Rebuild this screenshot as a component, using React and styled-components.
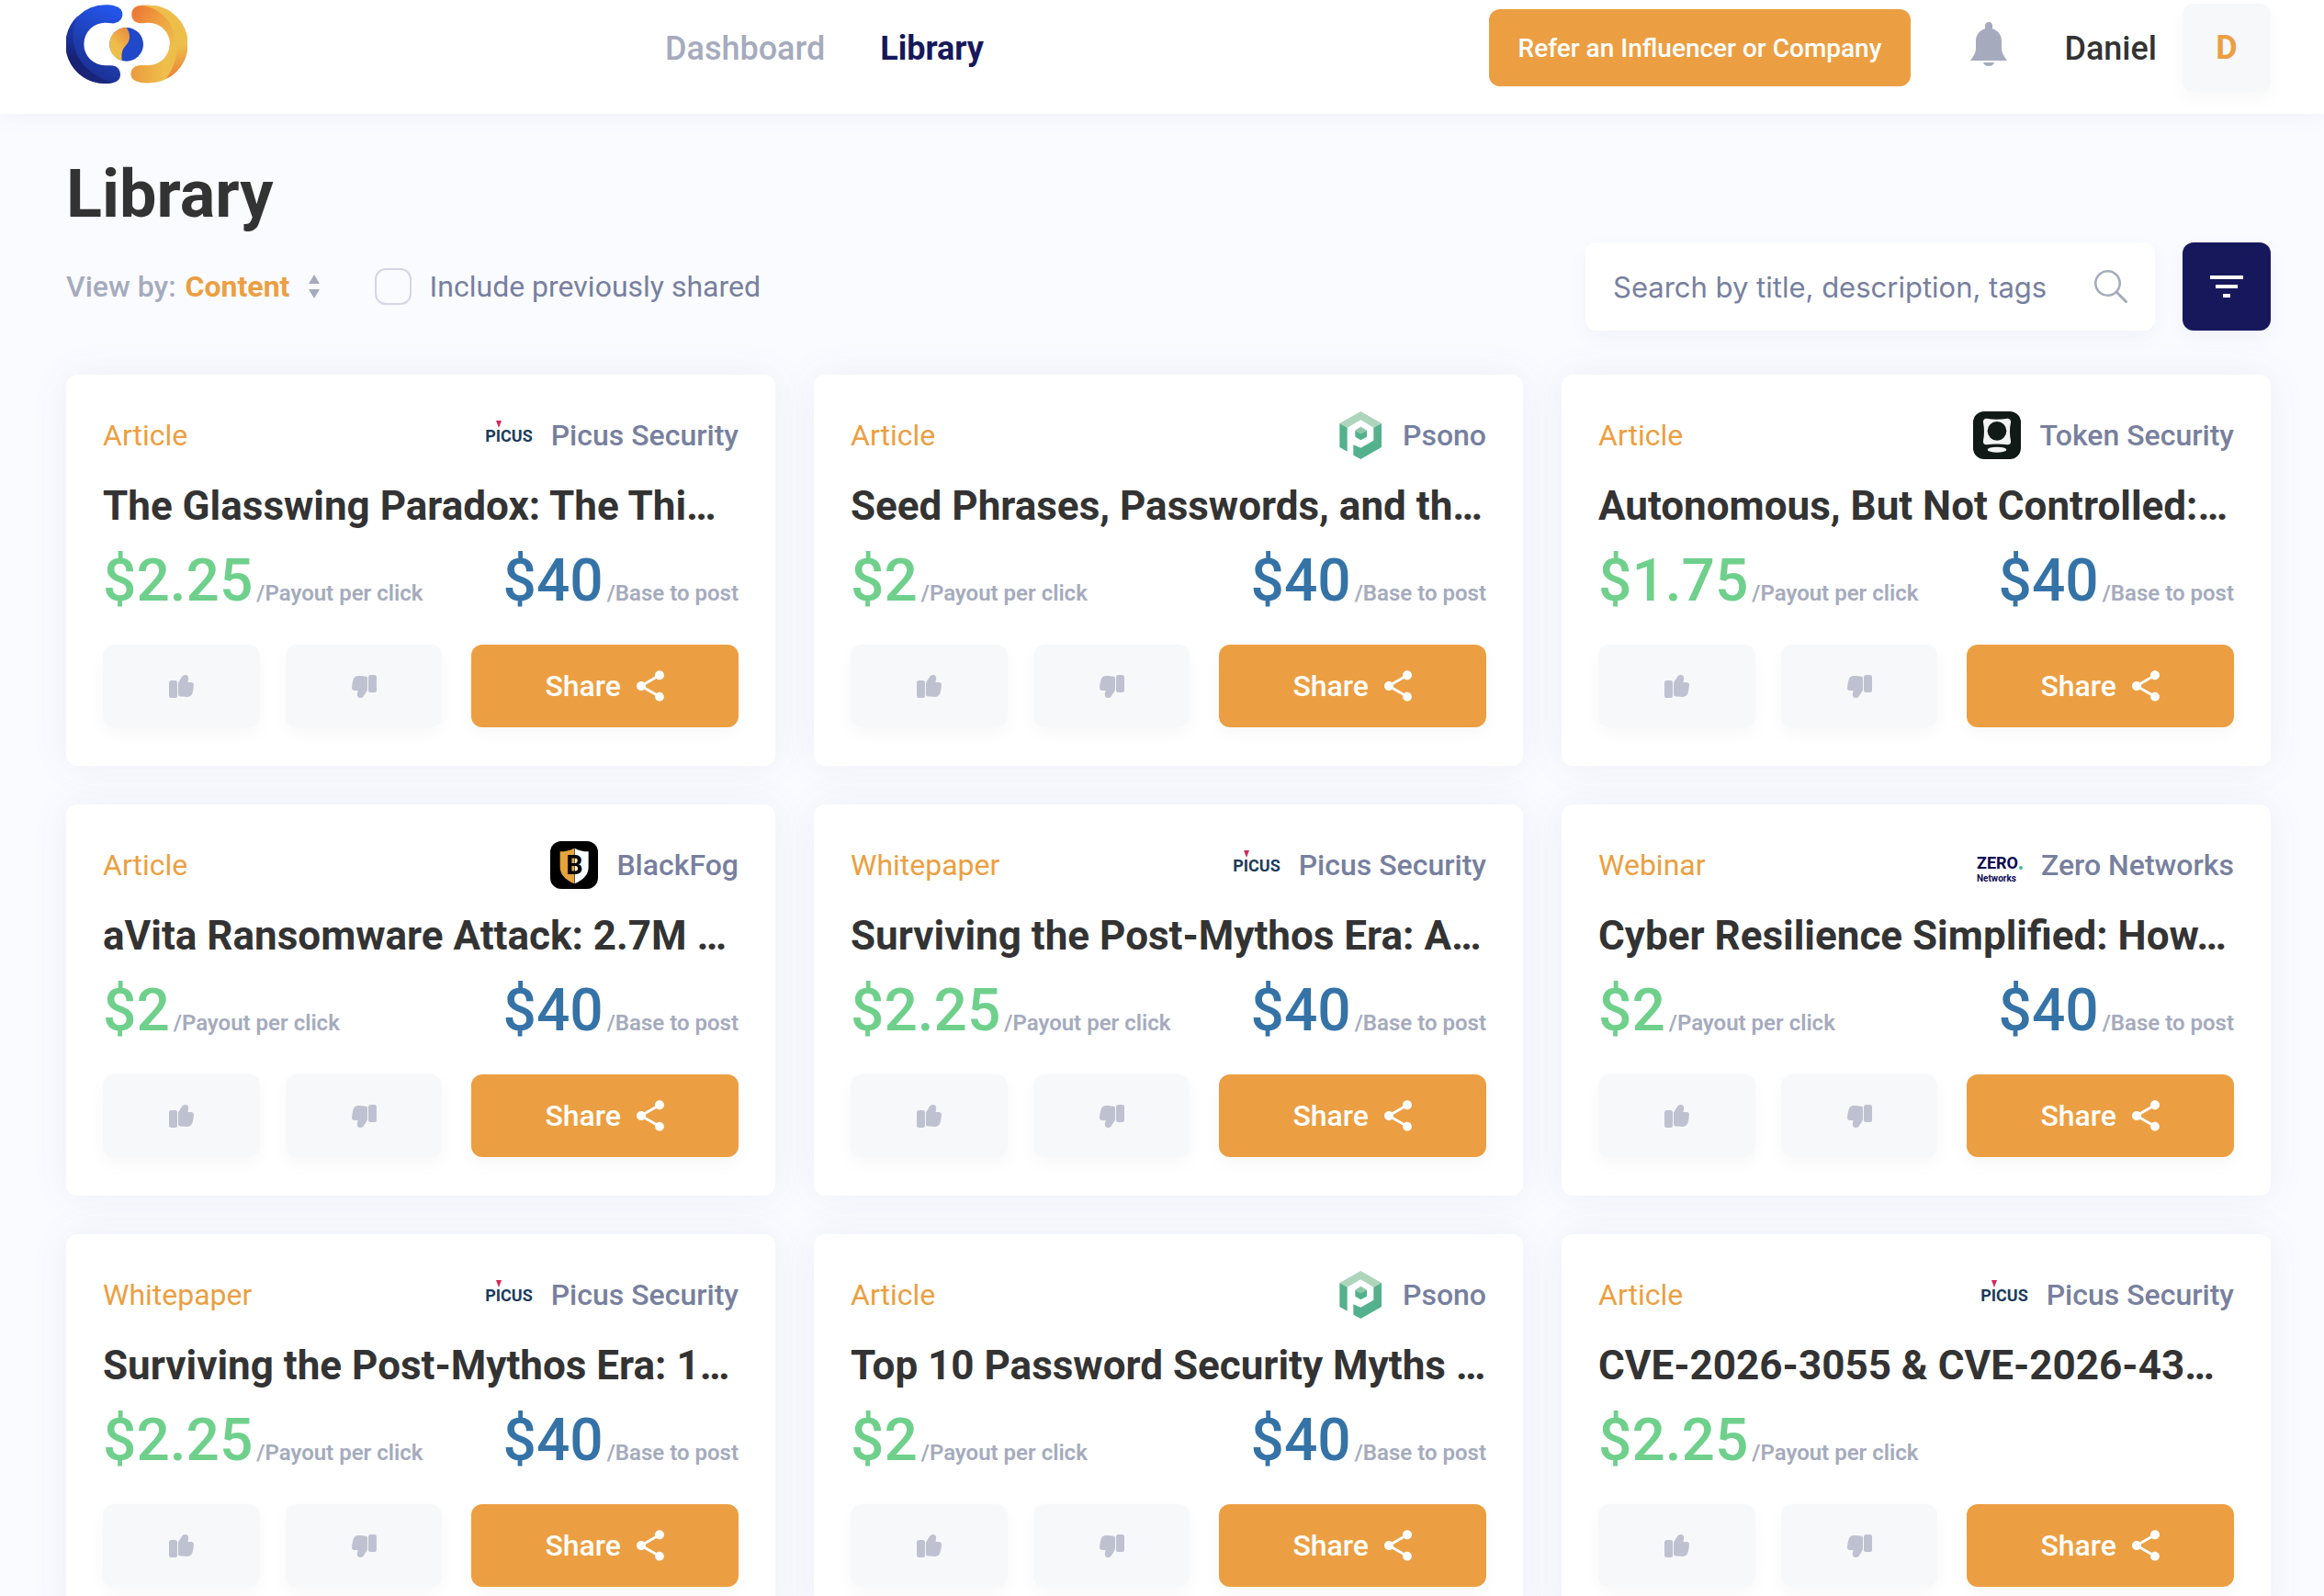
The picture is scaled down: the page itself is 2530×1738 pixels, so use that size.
import React from 'react'
import styled, { createGlobalStyle } from 'styled-components'
import { MdFilterList, MdShare } from 'react-icons/md'

const GlobalStyle = createGlobalStyle`
  * {
    box-sizing: border-box;
  }
  body {
    margin: 0;
    background-color: #fafbff;
    font-family: Roboto, 'Liberation Sans', sans-serif;
    font-size: 32px;
    color: #333333;
  }
  button, input, select {
    font-family: inherit;
    font-size: inherit;
    border: none;
    outline: none;
    padding: 0;
    margin: 0;
  }
  button {
    cursor: pointer;
  }
`
const Page = styled.div`
  height: 100vh;
  overflow: hidden;
`
const Header = styled.header`
  display: flex;
  align-items: center;
  padding: 4px 58px 24px 72px;
  background-color: #ffffff;
  box-shadow: 0 0 24px rgba(90, 100, 170, 0.08);
`
const LogoLink = styled.a`
  display: flex;
  padding-bottom: 8px;
`
const Nav = styled.nav`
  display: flex;
  flex: 1;
  gap: 60px;
  margin-left: 520px;
  padding-top: 2px;
`
const NavLink = styled.a`
  font-size: 36px;
  line-height: 42px;
  font-weight: ${(props) => (props.$active ? 700 : 500)};
  color: ${(props) => (props.$active ? '#17185b' : '#a5abbd')};
  text-decoration: none;
`
const ReferButton = styled.button`
  height: 84px;
  padding: 0 32px;
  border-radius: 12px;
  background-color: #eb9f42;
  color: #ffffff;
  font-size: 28px;
  font-weight: 500;
`
const BellButton = styled.button`
  display: flex;
  margin: 0 62px 8px 65px;
  background: none;
`
const UserName = styled.span`
  padding-top: 2px;
  font-size: 36px;
  line-height: 42px;
  font-weight: 500;
`
const Avatar = styled.button`
  width: 96px;
  height: 96px;
  margin-left: 28px;
  border-radius: 12px;
  background-color: #f6f8fa;
  box-shadow: 0 8px 20px rgba(0, 0, 0, 0.03);
  color: #eb9f42;
  font-size: 36px;
  font-weight: 700;
`
const Main = styled.main`
  padding: 46px 58px 42px 72px;
`
const Heading = styled.h1`
  margin: 0;
  font-size: 72px;
  line-height: 84px;
  font-weight: 700;
`
const Toolbar = styled.div`
  display: flex;
  align-items: center;
  margin: 10px 0 48px;
`
const ViewBy = styled.label`
  display: flex;
  align-items: center;
  gap: 10px;
  color: #a5abbd;
  font-weight: 500;
`
const ViewSelect = styled.select`
  width: 124px;
  appearance: none;
  background: none;
  color: #eb9f42;
  font-weight: 700;
  cursor: pointer;
`
const IncludeLabel = styled.label`
  display: flex;
  flex: 1;
  align-items: center;
  gap: 20px;
  margin-left: 60px;
  color: #77809e;
`
const Checkbox = styled.input`
  appearance: none;
  width: 40px;
  height: 40px;
  border: 2px solid #d5d6e2;
  border-radius: 12px;
  &:checked {
    background-color: #eb9f42;
  }
`
const SearchBox = styled.label`
  display: flex;
  align-items: center;
  width: 620px;
  height: 96px;
  padding: 0 30px;
  border-radius: 12px;
  background-color: #ffffff;
  box-shadow: 0 8px 20px rgba(90, 100, 170, 0.05);
`
const SearchInput = styled.input`
  flex: 1;
  min-width: 0;
  background: none;
  font-family: Inter, sans-serif;
  font-size: 31px;
  color: #333333;
  &::placeholder {
    color: #77809e;
    opacity: 1;
  }
`
const FilterButton = styled.button`
  display: flex;
  align-items: center;
  justify-content: center;
  width: 96px;
  height: 96px;
  margin-left: 30px;
  border-radius: 12px;
  background-color: #17185b;
  box-shadow: 0 8px 20px rgba(90, 100, 170, 0.06);
  color: #ffffff;
`
const Grid = styled.div`
  display: grid;
  grid-template-columns: repeat(3, minmax(0, 1fr));
  gap: 42px;
`
const Card = styled.article`
  padding: 40px 40px 42px;
  border-radius: 12px;
  background-color: #ffffff;
  box-shadow: 0 0 40px rgba(90, 100, 170, 0.08);
`
const CardHead = styled.div`
  display: flex;
  align-items: center;
  justify-content: space-between;
`
const Kind = styled.span`
  color: #eb9f42;
`
const Company = styled.span`
  display: flex;
  align-items: center;
  gap: 20px;
  height: 52px;
  color: #77809e;
  font-weight: 500;
`
const Title = styled.h2`
  margin: 21px 0 14px;
  overflow: hidden;
  font-size: 44px;
  line-height: 60px;
  font-weight: 700;
  white-space: nowrap;
`
const Prices = styled.div`
  display: flex;
  justify-content: space-between;
  height: 76px;
  margin-bottom: 31px;
`
const Price = styled.div`
  display: flex;
  align-items: baseline;
  gap: 4px;
  font-size: 64px;
  line-height: 76px;
  font-weight: 500;
  color: ${(props) => (props.$base ? '#3573a7' : '#6fd08c')};
`
const Unit = styled.span`
  font-size: 24px;
  line-height: 28px;
  font-weight: 600;
  color: #a5abbd;
`
const Actions = styled.div`
  display: flex;
  gap: 32px;
`
const Votes = styled.div`
  display: flex;
  flex: 1;
  gap: 28px;
`
const VoteButton = styled.button`
  display: flex;
  flex: 1;
  align-items: center;
  justify-content: center;
  height: 90px;
  border-radius: 12px;
  background-color: #f6f8fa;
  box-shadow: 0 8px 20px rgba(0, 0, 0, 0.03);
`
const ShareButton = styled.button`
  display: flex;
  align-items: center;
  justify-content: center;
  gap: 12px;
  width: 42%;
  height: 90px;
  padding-left: 4px;
  border-radius: 12px;
  background-color: #eb9f42;
  box-shadow: 0 8px 20px rgba(0, 0, 0, 0.03);
  color: #ffffff;
  font-weight: 500;
`

function Logo() {
  return (
    <svg width="132" height="86" viewBox="96 14 396 258">
      <defs>
        <linearGradient id="blue" x1="0.9" y1="0" x2="0.5" y2="1">
          <stop offset="0" stopColor="#2458f2" />
          <stop offset="0.5" stopColor="#1f42bd" />
          <stop offset="1" stopColor="#1b2d8c" />
        </linearGradient>
        <linearGradient id="navy" x1="0.3" y1="0" x2="0.5" y2="1">
          <stop offset="0" stopColor="#1d3fb4" />
          <stop offset="0.6" stopColor="#172071" />
          <stop offset="1" stopColor="#1a267c" />
        </linearGradient>
        <linearGradient id="orange" x1="0" y1="0" x2="0.7" y2="0.6">
          <stop offset="0" stopColor="#ec7032" />
          <stop offset="0.55" stopColor="#eea040" />
          <stop offset="1" stopColor="#eebe4a" />
        </linearGradient>
        <linearGradient id="tail" x1="0" y1="0" x2="0.7" y2="0">
          <stop offset="0" stopColor="#ec9a3e" />
          <stop offset="1" stopColor="#eebe4a" />
        </linearGradient>
        <linearGradient id="edge" x1="0.2" y1="0" x2="0.4" y2="1">
          <stop offset="0" stopColor="#eebe4a" />
          <stop offset="0.65" stopColor="#eebe4a" />
          <stop offset="1" stopColor="#ec863a" />
        </linearGradient>
        <linearGradient id="ballGold" x1="0.8" y1="0" x2="0.4" y2="0.6">
          <stop offset="0" stopColor="#ec8c3a" />
          <stop offset="1" stopColor="#eebe4a" />
        </linearGradient>
      </defs>
      <path
        d="M224 15c14 0 26 1 37 6 12 4 19 13 19 24 0 20-16 32-37 30-6-1-12-2-19-2a70 70 0 0 0 0 140c6 0 12 0 18 0 19 0 31 12 31 30 0 15-9 23-23 26a128 128 0 0 1-26 3 128 128 0 0 1 0-257z"
        fill="url(#blue)"
      />
      <path
        d="M134 51C96 128 125 234 250 269a128 128 0 0 1-26 3A128 128 0 0 1 134 51z"
        fill="url(#navy)"
      />
      <path
        d="M365 16a127 127 0 0 1 0 254c-14 0-25-1-35-5-14-4-22-12-22-24 0-19 15-29 36-28 7 0 14 0 21 0a70 70 0 0 0 0-140c-8 0-13 1-20 2-20 1-35-9-35-29 0-16 10-26 25-28 10-2 20-2 30-2z"
        fill="url(#orange)"
      />
      <path
        d="M434 143a70 70 0 0 1-69 70c-7 0-14 0-21 0-21-1-36 9-36 28 0 12 8 20 22 24 10 4 21 5 35 5 22 0 40-4 56-12 32-36 44-72 42-115z"
        fill="url(#tail)"
      />
      <path
        d="M349 17c94 17 149 138 72 241A127 127 0 0 0 365 16c-6 0-10 0-16 1z"
        fill="url(#edge)"
      />
      <circle cx="293" cy="144" r="55" fill="#2048c8" />
      <path
        d="M293 89c14 20 13 40 2 54-12 13-20 22-17 54A55 55 0 0 1 293 89z"
        fill="url(#ballGold)"
      />
    </svg>
  )
}

function Bell() {
  return (
    <svg width="40" height="48" viewBox="0 0 40 48" fill="#a5abbd">
      <path d="M20 0c2.500 0 4 1.700 4 4v3.200c6 1.700 10 7 10 13.300v8c0 5 2.500 8.500 6 13.500H0c3.500-5 6-8.500 6-13.500v-8C6 14.200 10 9 16 7.200V4c0-2.300 1.500-4 4-4z" />
      <path d="M14 44h12c-.6 2.500-3 4-6 4s-5.400-1.500-6-4z" />
    </svg>
  )
}

function Thumb({ down }) {
  return (
    <svg width="27" height="25" viewBox="0 0 27 25" fill="#bec2d0">
      <g transform={down ? 'rotate(180 13.5 12.5)' : undefined}>
        <rect x="0" y="6" width="9" height="19" rx="2.500" />
        <path d="M10 9.500c0-1.200.5-2 1.200-3l3.200-5C15.200.4 16.400-.1 18 0c2 .2 3.200 1.600 3.200 3.500 0 1.600-.5 3-.8 4.500H24c2 0 3 1.200 2.900 3-.2 3-.5 5.500-1.400 8.500-.9 3-2.800 4.500-6 4.400-3-.1-5.500-.2-8-.7-1-.3-1.500-.8-1.500-1.700z" />
      </g>
    </svg>
  )
}

function SearchIcon() {
  return (
    <svg width="36" height="36" viewBox="0 0 36 36" fill="none" stroke="#a5abbd">
      <circle cx="14.500" cy="14.500" r="13.200" strokeWidth="2.600" />
      <path d="M24 24l10.500 10.500" strokeWidth="3" strokeLinecap="round" />
    </svg>
  )
}

function SortArrows() {
  return (
    <svg width="12" height="26" viewBox="0 0 12 26" fill="#a5abbd">
      <path d="M6 0l6 10H0z" />
      <path d="M0 16h12L6 26z" />
    </svg>
  )
}

function PicusLogo() {
  return (
    <svg width="52" height="52" viewBox="0 0 52 52" aria-hidden="true">
      <text
        x="26"
        y="33"
        textAnchor="middle"
        fontFamily="Roboto, sans-serif"
        fontSize="18"
        fontWeight="700"
        fill="#1b3c5c"
      >
        PICUS
      </text>
      <path d="M12 10h6l-3 8z" fill="#d6285a" />
    </svg>
  )
}

function PsonoLogo() {
  return (
    <svg width="52" height="52" viewBox="44 54 156 156">
      <path d="M54 93l69-39 68 39-26 14-42-25-44 25z" fill="#add5bb" />
      <path d="M54 93l25 14v78l-25-14z" fill="#54b18d" />
      <path d="M191 93v78l-68 39-24-13v-34l24 10 42-24v-42z" fill="#54b18d" />
      <path d="M105 116l18-12 20 12-20 11z" fill="#8cc8a8" />
      <path d="M105 116l18 11 20-11v21l-20 11-18-11z" fill="#54b18d" />
    </svg>
  )
}

function TokenLogo() {
  return (
    <svg width="52" height="52" viewBox="0 0 156 156">
      <rect width="156" height="156" rx="36" fill="#111a17" />
      <path
        d="M44 23c22 4 46 4 68 0 8 0 12 5 11 13-4 20-4 40 0 60 1 9-3 13-11 13-22-3-46-3-68 0-8 0-12-4-11-13 4-20 4-40 0-60-1-8 3-13 11-13z"
        fill="#f2f4f3"
      />
      <circle cx="78" cy="64" r="31" fill="#111a17" />
      <ellipse cx="78" cy="125" rx="31" ry="9" fill="#f2f4f3" />
    </svg>
  )
}

function BlackFogLogo() {
  return (
    <svg width="52" height="52" viewBox="0 0 156 156" aria-hidden="true">
      <rect width="156" height="156" rx="36" fill="#000000" />
      <path d="M78 23c-14 8-30 11-46 11v50c0 26 18 42 46 55z" fill="#e5a43c" />
      <path d="M80 23c14 8 29 11 45 11v50c0 26-17 42-45 55z" fill="#ffffff" />
      <text
        x="79"
        y="107"
        textAnchor="middle"
        fontFamily="Roboto, sans-serif"
        fontSize="86"
        fontWeight="700"
        fill="#000000"
      >
        B
      </text>
    </svg>
  )
}

function ZeroLogo() {
  return (
    <svg width="52" height="52" viewBox="0 0 52 52" aria-hidden="true">
      <g fontFamily="Roboto, sans-serif" fontWeight="700" fill="#0b0a4f">
        <text x="2" y="30" fontSize="18">
          ZERO
        </text>
        <text x="2" y="44" fontSize="10">
          Networks
        </text>
      </g>
      <circle cx="50" cy="29" r="2" fill="#3fc08a" />
    </svg>
  )
}

const companies = {
  picus: { name: 'Picus Security', Icon: PicusLogo },
  psono: { name: 'Psono', Icon: PsonoLogo },
  token: { name: 'Token Security', Icon: TokenLogo },
  blackfog: { name: 'BlackFog', Icon: BlackFogLogo },
  zero: { name: 'Zero Networks', Icon: ZeroLogo },
}

const items = [
  { kind: 'Article', company: 'picus', title: 'The Glasswing Paradox: The Thi…', click: '$2.25', base: '$40' },
  { kind: 'Article', company: 'psono', title: 'Seed Phrases, Passwords, and th…', click: '$2', base: '$40' },
  { kind: 'Article', company: 'token', title: 'Autonomous, But Not Controlled:…', click: '$1.75', base: '$40' },
  { kind: 'Article', company: 'blackfog', title: 'aVita Ransomware Attack: 2.7M …', click: '$2', base: '$40' },
  { kind: 'Whitepaper', company: 'picus', title: 'Surviving the Post-Mythos Era: A…', click: '$2.25', base: '$40' },
  { kind: 'Webinar', company: 'zero', title: 'Cyber Resilience Simplified: How…', click: '$2', base: '$40' },
  { kind: 'Whitepaper', company: 'picus', title: 'Surviving the Post-Mythos Era: 1…', click: '$2.25', base: '$40' },
  { kind: 'Article', company: 'psono', title: 'Top 10 Password Security Myths …', click: '$2', base: '$40' },
  { kind: 'Article', company: 'picus', title: 'CVE-2026-3055 & CVE-2026-43…', click: '$2.25' },
]

function LibraryCard({ item }) {
  const { name, Icon } = companies[item.company]
  return (
    <Card>
      <CardHead>
        <Kind>{item.kind}</Kind>
        <Company>
          <Icon />
          {name}
        </Company>
      </CardHead>
      <Title>{item.title}</Title>
      <Prices>
        <Price>
          {item.click}
          <Unit>/Payout per click</Unit>
        </Price>
        {item.base && (
          <Price $base>
            {item.base}
            <Unit>/Base to post</Unit>
          </Price>
        )}
      </Prices>
      <Actions>
        <Votes>
          <VoteButton aria-label="Like">
            <Thumb />
          </VoteButton>
          <VoteButton aria-label="Dislike">
            <Thumb down />
          </VoteButton>
        </Votes>
        <ShareButton>
          Share
          <MdShare size={40} />
        </ShareButton>
      </Actions>
    </Card>
  )
}

function App() {
  return (
    <Page>
      <GlobalStyle />
      <Header>
        <LogoLink href="#" aria-label="Home">
          <Logo />
        </LogoLink>
        <Nav>
          <NavLink href="#dashboard">Dashboard</NavLink>
          <NavLink href="#library" $active>
            Library
          </NavLink>
        </Nav>
        <ReferButton>Refer an Influencer or Company</ReferButton>
        <BellButton aria-label="Notifications">
          <Bell />
        </BellButton>
        <UserName>Daniel</UserName>
        <Avatar>D</Avatar>
      </Header>
      <Main>
        <Heading>Library</Heading>
        <Toolbar>
          <ViewBy>
            View by:
            <ViewSelect defaultValue="Content">
              <option>Content</option>
              <option>Company</option>
            </ViewSelect>
            <SortArrows />
          </ViewBy>
          <IncludeLabel>
            <Checkbox type="checkbox" />
            Include previously shared
          </IncludeLabel>
          <SearchBox>
            <SearchInput
              type="text"
              aria-label="Search"
              placeholder="Search by title, description, tags"
            />
            <SearchIcon />
          </SearchBox>
          <FilterButton aria-label="Filters">
            <MdFilterList size={48} />
          </FilterButton>
        </Toolbar>
        <Grid>
          {items.map((item) => (
            <LibraryCard key={item.title} item={item} />
          ))}
        </Grid>
      </Main>
    </Page>
  )
}

export default App
